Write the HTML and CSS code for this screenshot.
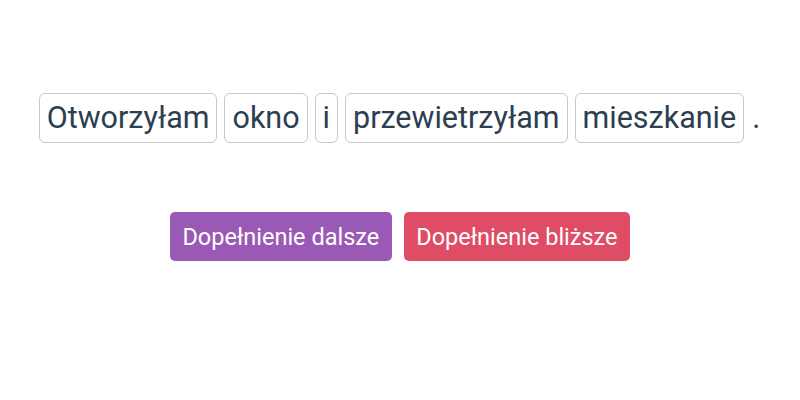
FILE: index.html
```html
<!DOCTYPE html>
<html lang="pl">
<head>
    <meta charset="UTF-8">
    <meta name="viewport" content="width=device-width, initial-scale=1.0">
    <title>Dopełnienie</title>
    <link rel="stylesheet" href="styles.css">
</head>
<body>

    <div class="sentence">
        <span class="word">Otworzyłam</span>
        <span class="word">okno</span>
        <span class="word">i</span>
        <span class="word">przewietrzyłam</span>
        <span class="word">mieszkanie</span>
        <span class="punct">.</span>
    </div>

    <div class="answers">
        <button class="answer answer-far">Dopełnienie dalsze</button>
        <button class="answer answer-near">Dopełnienie bliższe</button>
    </div>

</body>
</html>
```

FILE: styles.css
```css
body {
    margin: 0;
    font-family: Roboto, "Liberation Sans", sans-serif;
    color: #2c3e50;
    background: #fff;
}
.sentence {
    display: flex;
    justify-content: center;
    align-items: center;
    gap: 7px;
    padding-top: 93px;
    font-size: 30.5px;
}
.word {
    border: 1px solid #c8c8c8;
    border-radius: 6px;
    padding: 0 7px;
    line-height: 48px;
}
.punct {
    line-height: 48px;
    padding: 0 1px;
}
.answers {
    display: flex;
    justify-content: center;
    gap: 12px;
    margin-top: 69px;
}
.answer {
    font-family: inherit;
    font-size: 23.5px;
    color: #fff;
    border: none;
    border-radius: 5px;
    padding: 0 12.5px;
    height: 49px;
    cursor: pointer;
}
.answer-far {
    background-color: #9b59b6;
}
.answer-near {
    background-color: #df4c66;
}
```
